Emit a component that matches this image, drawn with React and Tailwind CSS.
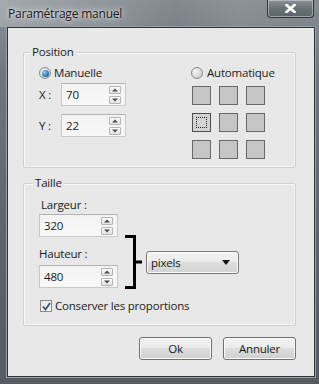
import React from "react";

const font = { fontFamily: '"Segoe UI", "Open Sans", "Noto Sans", sans-serif' };
const txt = "text-[11.5px] leading-[16px] tracking-[-0.2px] text-[#1a1a1a]";

function Spinner() {
  return (
    <div className="flex flex-col gap-[2px] mr-[4px]">
      {[0, 1].map((i) => (
        <div
          key={i}
          className="w-[12px] h-[8px] border border-[#b4b4b4] rounded-[1px] bg-[linear-gradient(180deg,#fbfbfb,#e2e2e2)] flex items-center justify-center"
        >
          <svg width="6" height="4" viewBox="0 0 6 4">
            {i === 0 ? (
              <path d="M0 3.5 L3 0.5 L6 3.5 Z" fill="#4a4a4a" />
            ) : (
              <path d="M0 0.5 L3 3.5 L6 0.5 Z" fill="#4a4a4a" />
            )}
          </svg>
        </div>
      ))}
    </div>
  );
}

function NumInput({ value, w }) {
  return (
    <div
      className={`${w} h-[23px] border border-[#c9c9c9] border-t-[#b3b3b3] bg-[linear-gradient(180deg,#f3f3f3,#f8f8f8)] flex items-center justify-between`}
    >
      <span className={`pl-[4px] ${txt}`}>{value}</span>
      <Spinner />
    </div>
  );
}

function Radio({ checked }) {
  return (
    <div className="w-[12px] h-[12px] rounded-full border border-[#8c8c8c] bg-[radial-gradient(circle_at_35%_35%,#f4f4f4,#c4c4c4)] flex items-center justify-center">
      {checked && (
        <div className="w-[7px] h-[7px] rounded-full bg-[radial-gradient(circle_at_35%_35%,#8fd0f5,#1b6aa5_70%,#0c3f66)]" />
      )}
    </div>
  );
}

function Square({ selected }) {
  return (
    <div
      className={`w-[19px] h-[19px] border ${
        selected ? "border-[#4e4e4e] bg-[#d4d4d4]" : "border-[#686868] bg-[#c6c6c6]"
      } flex items-center justify-center`}
    >
      {selected && <div className="w-[11px] h-[11px] border border-dotted border-[#222]" />}
    </div>
  );
}

function Button({ children }) {
  return (
    <div className={`w-[73px] h-[23px] rounded-[3px] border border-[#707070] bg-[linear-gradient(180deg,#f3f3f3_0%,#ebebeb_45%,#dddddd_50%,#cfcfcf_100%)] shadow-[inset_0_0_0_1px_#fcfcfc] flex items-center justify-center ${txt}`}>
      {children}
    </div>
  );
}

export default function App() {
  return (
    <div
      style={font}
      className="w-[319px] h-[384px] flex flex-col bg-[linear-gradient(180deg,#8d9399_0%,#6f767d_20%,#5d646b_60%,#555b62_100%)] overflow-hidden"
    >
      {/* title bar */}
      <div className="h-[27px] flex items-start justify-between bg-[linear-gradient(90deg,rgba(180,184,188,0.6)_0%,rgba(150,155,160,0.4)_35%,rgba(90,96,103,0.2)_55%,rgba(140,146,152,0.3)_75%,rgba(100,106,112,0.2)_100%)]">
        <span className="ml-[8px] mt-[6px] text-[12px] leading-[16px] tracking-[-0.2px] text-[#151515] [text-shadow:0_0_8px_rgba(255,255,255,0.9),0_0_3px_rgba(255,255,255,0.8)]">
          Paramétrage manuel
        </span>
        <div className="mr-[5px] w-[47px] h-[18px] rounded-b-[4px] border border-t-0 border-[#2f343a] shadow-[inset_0_0_0_1px_rgba(210,214,218,0.55)] bg-[linear-gradient(180deg,#8c9298,#6a7077_50%,#5d636a)] flex items-center justify-center">
          <svg width="11" height="9" viewBox="0 0 11 9">
            <path d="M1.5 1 L9.5 8 M9.5 1 L1.5 8" stroke="#fff" strokeWidth="2.6" strokeLinecap="square" />
          </svg>
        </div>
      </div>

      {/* client */}
      <div className="ml-[7px] mr-[4px] mb-[7px] flex-1 border border-[#2e3338] bg-[#e8e8e8] shadow-[0_0_0_1px_#9aa0a6] flex flex-col pl-[15px] pt-[24px]">
        {/* Position group */}
        <div className="relative w-[273px] h-[116px] border border-[#cfcfcf] rounded-[2px] shadow-[inset_0_0_0_1px_#f6f6f6] flex">
          <span className={`absolute -top-[9px] left-[6px] px-[2px] bg-[#e8e8e8] ${txt}`}>
            Position
          </span>
          <div className="w-[167px] pl-[15px] pt-[12px] flex flex-col">
            <div className="h-[16px] flex items-center gap-[3px]">
              <Radio checked />
              <span className={txt}>Manuelle</span>
            </div>
            <div className="mt-[2px] flex items-center">
              <span className={`w-[22px] ${txt}`}>X :</span>
              <NumInput value="70" w="w-[65px]" />
            </div>
            <div className="mt-[8px] flex items-center">
              <span className={`w-[22px] ${txt}`}>Y :</span>
              <NumInput value="22" w="w-[65px]" />
            </div>
          </div>
          <div className="pt-[12px] flex flex-col">
            <div className="h-[16px] flex items-center gap-[4px]">
              <Radio />
              <span className={txt}>Automatique</span>
            </div>
            <div className="ml-[1px] mt-[5px] grid grid-cols-[19px_19px_19px] gap-x-[8px] gap-y-[8px]">
              <Square />
              <Square />
              <Square />
              <Square selected />
              <Square />
              <Square />
              <Square />
              <Square />
              <Square />
            </div>
          </div>
        </div>

        {/* Taille group */}
        <div className="relative mt-[15px] w-[273px] h-[143px] border border-[#cfcfcf] rounded-[2px] shadow-[inset_0_0_0_1px_#f6f6f6] pl-[15px] pt-[13px] flex flex-col">
          <span className={`absolute -top-[9px] left-[9px] px-[2px] bg-[#e8e8e8] ${txt}`}>
            Taille
          </span>
          <div className="flex items-start">
            <div className="w-[79px] flex flex-col">
              <span className={`ml-[2px] ${txt}`}>Largeur :</span>
              <div className="mt-[1px]">
                <NumInput value="320" w="w-[79px]" />
              </div>
              <span className={`mt-[9px] ${txt}`}>Hauteur :</span>
              <div className="mt-[3px]">
                <NumInput value="480" w="w-[79px]" />
              </div>
            </div>
            <svg className="ml-[7px] mt-[38px]" width="18" height="54" viewBox="0 0 18 54">
              <path d="M0 1.5 H9.5 V52.5 H0 M9.5 27 H17" fill="none" stroke="#000" strokeWidth="3" />
            </svg>
            <div className="ml-[3px] mt-[54px] w-[93px] h-[23px] rounded-[3px] border border-[#7a7a7a] bg-[linear-gradient(180deg,#f4f4f4_0%,#ebebeb_45%,#dedede_50%,#d3d3d3_100%)] shadow-[inset_0_0_0_1px_#fbfbfb] flex items-center justify-between pl-[4px] pr-[8px]">
              <span className={txt}>pixels</span>
              <svg width="8" height="5" viewBox="0 0 8 5">
                <path d="M0 0 H8 L4 5 Z" fill="#111" />
              </svg>
            </div>
          </div>
          <div className="mt-[9px] h-[16px] flex items-center gap-[3px]">
            <div className="ml-[1px] w-[12px] h-[12px] border border-[#8a8a8a] bg-[linear-gradient(135deg,#e4e4e4,#fbfbfb)] flex items-center justify-center">
              <svg width="9" height="9" viewBox="0 0 9 9">
                <path d="M1 4.5 L3.5 7.5 L8 1" fill="none" stroke="#3b4f75" strokeWidth="1.8" />
              </svg>
            </div>
            <span className={txt}>Conserver les proportions</span>
          </div>
        </div>

        {/* buttons */}
        <div className="mt-[11px] w-[273px] flex justify-end gap-[11px]">
          <Button>Ok</Button>
          <Button>Annuler</Button>
        </div>
      </div>
    </div>
  );
}
